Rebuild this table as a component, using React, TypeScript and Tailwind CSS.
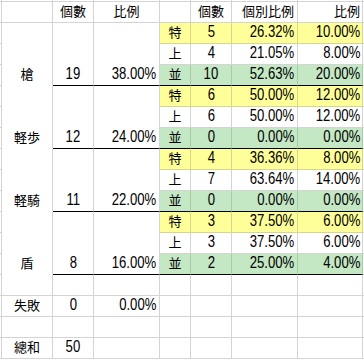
import React from 'react';

type Tier = [string, string, string, string];

interface Group {
  label: string;
  count: string;
  ratio: string;
  rows: Tier[];
}

const groups: Group[] = [
  {
    label: '槍',
    count: '19',
    ratio: '38.00%',
    rows: [
      ['特', '5', '26.32%', '10.00%'],
      ['上', '4', '21.05%', '8.00%'],
      ['並', '10', '52.63%', '20.00%'],
    ],
  },
  {
    label: '軽歩',
    count: '12',
    ratio: '24.00%',
    rows: [
      ['特', '6', '50.00%', '12.00%'],
      ['上', '6', '50.00%', '12.00%'],
      ['並', '0', '0.00%', '0.00%'],
    ],
  },
  {
    label: '軽騎',
    count: '11',
    ratio: '22.00%',
    rows: [
      ['特', '4', '36.36%', '8.00%'],
      ['上', '7', '63.64%', '14.00%'],
      ['並', '0', '0.00%', '0.00%'],
    ],
  },
  {
    label: '盾',
    count: '8',
    ratio: '16.00%',
    rows: [
      ['特', '3', '37.50%', '6.00%'],
      ['上', '3', '37.50%', '6.00%'],
      ['並', '2', '25.00%', '4.00%'],
    ],
  },
];

const NUM = "font-['Liberation_Sans',sans-serif] text-[16px] leading-[16px]";
const CJK = "font-['Noto_Sans_CJK_JP',sans-serif] text-[13px] leading-[16px]";

// fill + gridline colour per tier
const tierFill: Record<string, string> = {
  特: 'bg-[#ffff99] border-r-[#d6d68c]',
  上: 'bg-white border-r-[#d4d4d4]',
  並: 'bg-[#c4e7c4] border-r-[#a3cfa3]',
};

interface CellProps {
  className?: string;
  children?: React.ReactNode;
}

const Cell: React.FC<CellProps> = ({ className = '', children }) => (
  <div className={`flex items-end pb-[3px] border-r border-b border-[#d4d4d4] overflow-hidden whitespace-nowrap ${className}`}>
    {children}
  </div>
);

// narrow figures, the sheet uses a condensed face
const Num: React.FC<{ right?: boolean; children?: React.ReactNode }> = ({ right, children }) => (
  <span className={`inline-block scale-x-[0.82] ${right ? 'origin-right' : 'origin-center'}`}>{children}</span>
);

// slivers of the neighbouring cells at the window edges
const Edge: React.FC<{ className?: string }> = ({ className = '' }) => (
  <div className={`border-b border-[#d4d4d4] ${className}`} />
);

export default function App() {
  const cells: React.ReactNode[] = [];

  // top sliver row
  for (let i = 0; i < 8; i++) {
    cells.push(<div key={`t${i}`} className="border-r border-b border-[#d4d4d4]" />);
  }
  cells.push(<div key="t8" className="border-b border-[#d4d4d4]" />);

  // header
  cells.push(<Edge key="h-l" className="border-r" />);
  cells.push(<Cell key="h-a" />);
  cells.push(<Cell key="h-b" className={`justify-center ${CJK}`}>個數</Cell>);
  cells.push(<Cell key="h-c" className={`justify-center ${CJK}`}>比例</Cell>);
  cells.push(<Cell key="h-d" />);
  cells.push(<Cell key="h-e" className={`justify-center ${CJK}`}>個數</Cell>);
  cells.push(<Cell key="h-f" className={`justify-end pr-[3px] ${CJK}`}>個別比例</Cell>);
  cells.push(<Cell key="h-g" className={`justify-end pr-[2px] ${CJK}`}>比例</Cell>);
  cells.push(<Edge key="h-r" />);

  groups.forEach((g, gi) => {
    g.rows.forEach(([tier, n, part, total], ri) => {
      const last = ri === 2;
      const bottom = last ? 'border-b-black' : tier === '特' ? 'border-b-[#d6d68c]' : '';
      cells.push(<Edge key={`${gi}-${ri}-l`} className="border-r" />);
      if (ri === 0) {
        cells.push(
          <Cell key={`${gi}-a`} className={`row-span-3 justify-center border-b-white ${CJK}`}>
            {g.label}
          </Cell>
        );
        cells.push(
          <Cell key={`${gi}-b`} className={`row-span-3 justify-center border-b-black ${NUM}`}>
            <Num>{g.count}</Num>
          </Cell>
        );
        cells.push(
          <Cell key={`${gi}-c`} className={`row-span-3 justify-end pr-[3px] border-b-black ${NUM}`}>
            <Num right>{g.ratio}</Num>
          </Cell>
        );
      }
      const fill = tierFill[tier];
      cells.push(
        <Cell key={`${gi}-${ri}-d`} className={`justify-center ${fill} ${bottom} ${CJK}`}>
          {tier}
        </Cell>
      );
      cells.push(
        <Cell key={`${gi}-${ri}-e`} className={`justify-center ${fill} ${bottom} ${NUM}`}>
          <Num>{n}</Num>
        </Cell>
      );
      cells.push(
        <Cell key={`${gi}-${ri}-f`} className={`justify-end pr-[3px] ${fill} ${bottom} ${NUM}`}>
          <Num right>{part}</Num>
        </Cell>
      );
      cells.push(
        <Cell key={`${gi}-${ri}-g`} className={`justify-end pr-[2px] ${fill} ${bottom} ${NUM}`}>
          <Num right>{total}</Num>
        </Cell>
      );
      cells.push(<Edge key={`${gi}-${ri}-r`} />);
    });
  });

  // summary rows below the table
  const tail: [string, string, string][] = [
    ['', '', ''],
    ['失敗', '0', '0.00%'],
    ['', '', ''],
    ['總和', '50', ''],
  ];
  tail.forEach(([label, n, pct], ti) => {
    cells.push(<Edge key={`x${ti}-l`} className="border-r" />);
    cells.push(<Cell key={`x${ti}-a`} className={`justify-center ${CJK}`}>{label}</Cell>);
    cells.push(
      <Cell key={`x${ti}-b`} className={`justify-center ${NUM}`}>
        <Num>{n}</Num>
      </Cell>
    );
    cells.push(
      <Cell key={`x${ti}-c`} className={`justify-end pr-[3px] ${NUM}`}>
        <Num right>{pct}</Num>
      </Cell>
    );
    cells.push(<Cell key={`x${ti}-d`} />);
    cells.push(<Cell key={`x${ti}-e`} />);
    cells.push(<Cell key={`x${ti}-f`} />);
    cells.push(<Cell key={`x${ti}-g`} />);
    cells.push(<Edge key={`x${ti}-r`} />);
  });

  return (
    <div className="w-[364px] h-[359px] overflow-hidden bg-white text-black">
      <div className="grid grid-cols-[2px_51px_41px_66px_31px_41px_66px_65px_1px] grid-rows-[2px_repeat(17,21px)]">
        {cells}
      </div>
    </div>
  );
}
